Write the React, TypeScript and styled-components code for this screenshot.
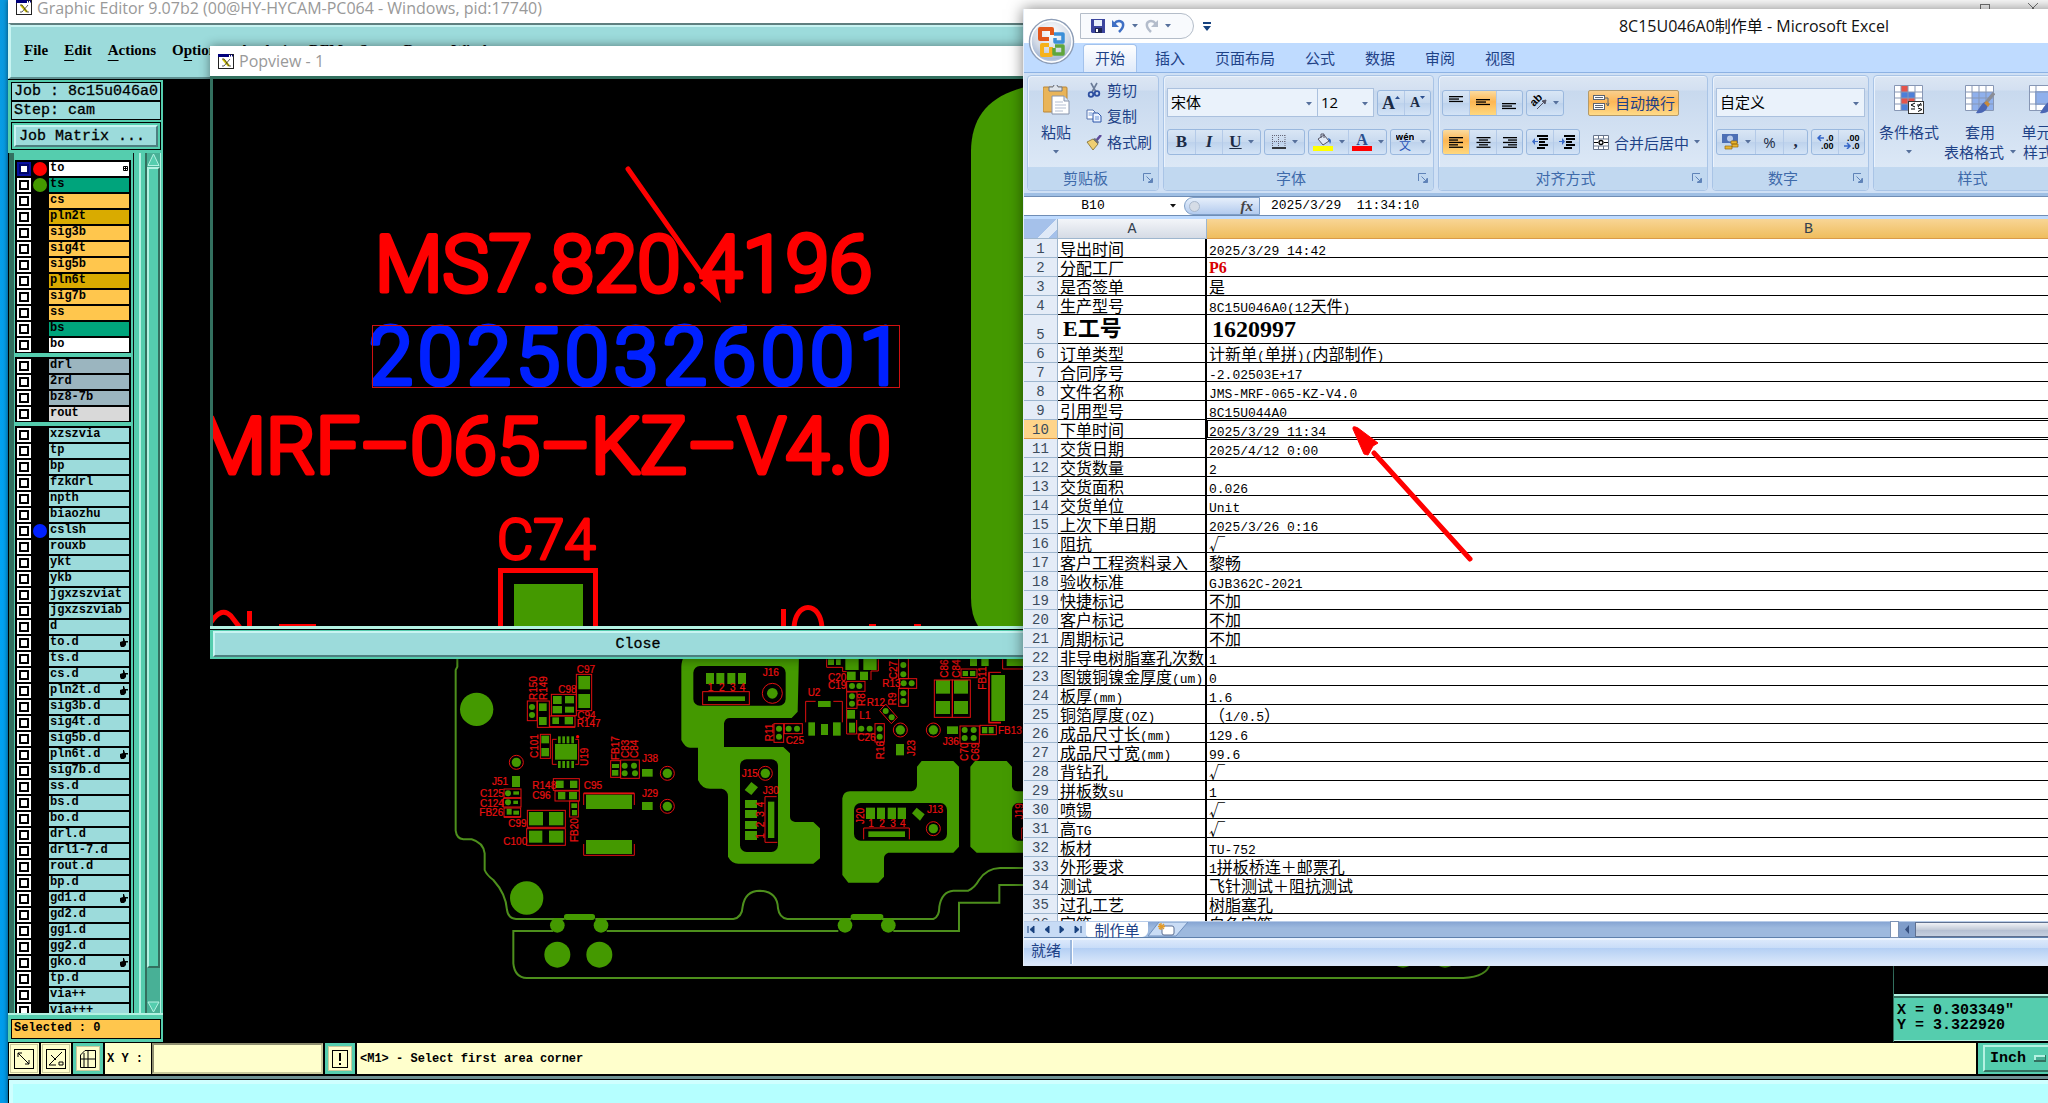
import React from 'react';
import styled, { createGlobalStyle, css } from 'styled-components';

const aqua = '#9cdbdb';
const teal = '#55cdae';
const tealDark = '#33705f';
const tealLight = '#b4f2e2';
const cream = '#ffffcc';
const pcbGreen = '#449900';
const uiFont = '"Open Sans", "Noto Sans CJK SC", sans-serif';
const monoFont = '"Liberation Mono", "Noto Sans CJK SC", monospace';
const ribbonInk = '#1e4287';

const GlobalStyle = createGlobalStyle`
  * { box-sizing: border-box; }
  html, body { margin: 0; height: 100%; overflow: hidden; background: #009be8; }
  #root { height: 100%; }
  button, input, select { font: inherit; color: inherit; margin: 0; padding: 0; border: 0; background: none; border-radius: 0; outline: 0; }
  svg { display: block; flex: none; }
`;

const Desktop = styled.div`
  position: relative;
  height: 100vh;
  padding-left: 8px;
  overflow: hidden;
  background: linear-gradient(#0a9ae0, #00a4f4 50%, #009ceb);
  font-family: ${uiFont};
`;

/* ---------- Graphic editor window ---------- */
const Editor = styled.main`
  display: flex;
  flex-direction: column;
  height: 100%;
  background: #000;
  box-shadow: 0 0 5px rgba(0, 0, 0, 0.6);
`;

const EditorTitle = styled.header`
  display: flex;
  align-items: center;
  gap: 5px;
  height: 23px;
  padding: 0 10px 8px 8px;
  background: #fff;
  color: #999;
  font-size: 16px;
  line-height: 16px;
  white-space: nowrap;
`;

const WindowButtons = styled.div`
  display: flex;
  gap: 38px;
  margin-left: auto;
  color: #777;
`;

const MenuBar = styled.nav`
  display: flex;
  align-items: center;
  gap: 16px;
  height: 56px;
  padding: 0 14px 2px 13px;
  background: ${aqua};
  border: solid;
  border-width: 2px 0 2px 3px;
  border-color: #5f7f7f #5f7f7f #5f8f90 #c8f4f2;
  box-shadow: inset 0 2px #c8f4f2;
  font: bold 15px/20px "Liberation Serif", serif;
`;

const MenuItem = styled.button`
  font: inherit;
  color: #000;
  & > u { text-underline-offset: 5px; }
`;

const Workspace = styled.div`
  display: flex;
  flex: 1;
  min-height: 0;
`;

const Sidebar = styled.aside`
  display: flex;
  flex-direction: column;
  width: 155px;
  flex: none;
  margin-top: 1px;
  background: ${teal};
  font: 15px/17px ${monoFont};
`;

const JobInfo = styled.div`
  margin: 2px 2px 2px 3px;
  border: 1px solid #000;
  background: ${aqua};
`;

const JobLine = styled.div`
  height: 17px;
  padding-left: 2px;
  -webkit-text-stroke: 0.3px #000;
  white-space: nowrap;
  & + & { border-top: 2px solid #000; height: 19px; }
`;

const MatrixFrame = styled.div`
  margin: 0 2px 3px 3px;
  padding: 2px;
  border: 1px solid #000;
`;

const MatrixButton = styled.button`
  display: block;
  width: 100%;
  height: 22px;
  padding-left: 3px;
  text-align: left;
  background: ${aqua};
  border: 2px solid;
  border-color: #c8f4f2 #4d7f80 #4d7f80 #c8f4f2;
  -webkit-text-stroke: 0.3px #000;
`;

const LayerPanel = styled.div`
  display: flex;
  flex: 1;
  min-height: 0;
  border-bottom: 2px solid ${tealLight};
`;

const LayerList = styled.div`
  width: 126px;
  padding: 7px 0 0 5px;
  overflow: hidden;
  border-left: 1px solid #000;
  background: linear-gradient(90deg, ${tealDark} 5px, ${teal} 5px);
  border-right: 1px solid #111;
`;

const LayerGroup = styled.div`
  margin: 0 2px 4px 1px;
  padding: 1px 2px 0;
  background: #000;
`;

const LayerRow = styled.label`
  display: grid;
  grid-template-columns: 14px 14px 1fr;
  column-gap: 2px;
  align-items: center;
  height: 16px;
`;

const LayerCheck = styled.input<{ $active?: boolean }>`
  appearance: none;
  width: 14px;
  height: 14px;
  background: #fff;
  border: 2px solid ${p => (p.$active ? '#0a10a0' : '#fff')};
  box-shadow: inset 0 0 0 2px ${p => (p.$active ? '#00066a' : '#000')};
`;

const LayerDot = styled.span<{ $color?: string }>`
  width: 14px;
  height: 14px;
  border-radius: 50%;
  background: ${p => p.$color || 'transparent'};
`;

const LayerName = styled.span<{ $bg: string }>`
  display: flex;
  align-items: center;
  justify-content: space-between;
  height: 14px;
  padding: 0 1px 1px;
  background: ${p => p.$bg};
  font: bold 12px/13px ${monoFont};
  white-space: nowrap;
`;

const Ridge = styled.div`
  width: 13px;
  background: linear-gradient(90deg, ${teal} 5px, ${tealLight} 5px 7px, ${teal} 7px 11px, ${tealDark} 11px);
`;

const ScrollTrack = styled.div`
  display: flex;
  flex-direction: column;
  width: 14px;
  background: #48b096;
  border-right: 1px solid ${tealLight};
`;

const ScrollThumb = styled.div`
  flex: 1;
  margin-bottom: 33px;
  background: ${teal};
  border: 2px solid;
  border-color: ${tealLight} ${tealDark} ${tealDark} ${tealLight};
`;

const Selected = styled.div`
  height: 20px;
  margin: 4px 2px 3px 3px;
  padding-left: 2px;
  border: 1px solid #000;
  background: #ffc64d;
  font: bold 12px/17px ${monoFont};
`;

const BoardCanvas = styled.div`
  flex: 1;
  min-width: 0;
  overflow: hidden;
`;

const Readouts = styled.aside`
  display: flex;
  flex-direction: column;
  justify-content: flex-end;
  width: 155px;
  flex: none;
  border-left: 1px solid ${tealDark};
`;

const Coordinates = styled.pre`
  margin: 0 0 1px;
  padding: 7px 3px 7px;
  background: ${teal};
  border-top: 2px solid ${tealLight};
  border-bottom: 1px solid ${tealLight};
  box-shadow: inset 0 2px ${tealDark};
  font: bold 15px/15px ${monoFont};
`;

const StatusRow = styled.div`
  display: flex;
  gap: 2px;
  height: 34px;
  padding: 1px 0 2px 1px;
  background: #000;
  font: bold 12px/16px ${monoFont};
`;

const ToolButton = styled.button<{ $teal?: boolean }>`
  display: grid;
  place-items: center;
  width: 30px;
  background: ${cream};
  border: ${p => (p.$teal ? `3px solid ${teal}` : `1px solid ${cream}`)};
  box-shadow: inset 0 0 0 1px #c9c99c;
`;

const CommandLabel = styled.label`
  display: flex;
  flex: none;
  align-items: center;
  gap: 9px;
  padding-left: 2px;
  background: ${cream};
`;

const CommandInput = styled.input`
  width: 171px;
  height: 31px;
  padding-left: 6px;
  background: ${cream};
  border: 2px solid;
  border-color: #8f8f70 #c9c99c #c9c99c #8f8f70;
  outline: 1px solid #000;
`;

const Message = styled.output`
  display: flex;
  flex: 1;
  align-items: center;
  padding-left: 3px;
  background: ${cream};
`;

const UnitFrame = styled.div`
  padding: 2px 0 2px 5px;
  width: 70px;
  background: ${teal};
`;

const UnitButton = styled.button`
  display: flex;
  align-items: center;
  gap: 8px;
  width: 80px;
  height: 27px;
  padding-left: 5px;
  border: 2px solid;
  border-color: ${tealLight} ${tealDark} ${tealDark} ${tealLight};
  font: bold 15px/18px ${monoFont};
`;

const BottomStrip = styled.footer`
  height: 27px;
  border-top: 3px solid #6f9294;
  padding: 1px 0 0 1px;
  background: #000;
  &::after { content: ''; display: block; height: 22px; background: #b5ffff; border: 4px solid #cfffff; border-bottom: 2px solid #6aa0a0; border-right: 0; }
`;

/* ---------- Popview window ---------- */
const Popview = styled.section`
  position: absolute;
  left: 210px;
  top: 46px;
  width: 900px;
  height: 613px;
  display: flex;
  flex-direction: column;
  background: #000;
  box-shadow: 0 0 10px rgba(0, 0, 0, 0.45);
`;

const PopTitle = styled.header`
  display: flex;
  align-items: center;
  gap: 5px;
  height: 30px;
  padding-left: 8px;
  background: #fff;
  color: #999;
  font-size: 16px;
`;

const PopCanvas = styled.div`
  flex: 1;
  border-top: 3px solid ${tealDark};
  border-left: 3px solid ${tealDark};
`;

const CloseFrame = styled.div`
  border-top: 3px solid ${tealLight};
  padding: 2px 3px;
  background: ${teal};
  box-shadow: inset 0 1px #000;
`;

const CloseButton = styled.button`
  display: block;
  width: 100%;
  height: 26px;
  padding: 1px 44px 0 0;
  background: ${aqua};
  border: 2px solid;
  border-color: #c8f4f2 #4d7f80 #4d7f80 #c8f4f2;
  font: 15px/20px ${monoFont};
  -webkit-text-stroke: 0.3px #000;
`;

/* ---------- Spreadsheet window ---------- */
const Excel = styled.section`
  position: absolute;
  left: 1023px;
  top: 9px;
  width: 1388px;
  background: #bfdbff;
  border-left: 1px solid #e6eef8;
  box-shadow: 0 0 14px rgba(0, 0, 0, 0.5);
  color: ${ribbonInk};
  font-size: 15px;
`;

const ExcelTitle = styled.header`
  display: flex;
  align-items: center;
  height: 34px;
  padding: 0 114px 0 56px;
  background: #fff;
`;

const QuickBar = styled.div`
  display: flex;
  align-items: center;
  gap: 7px;
  width: 114px;
  height: 26px;
  padding-left: 10px;
  background: #f8fafd;
  border: 1px solid #b4bdc9;
  border-radius: 0 13px 13px 0;
`;

const QuickMore = styled.button`
  margin-left: 9px;
`;

const DocTitle = styled.h1`
  flex: 1;
  margin: 0;
  text-align: center;
  font: 400 16px/24px ${uiFont};
  color: #111;
`;

const OfficeButton = styled.button`
  position: absolute;
  left: 4px;
  top: 9px;
`;

const Tabs = styled.nav`
  display: flex;
  align-items: flex-end;
  height: 29px;
  padding-left: 59px;
`;

const Tab = styled.button<{ $active?: boolean }>`
  height: 28px;
  padding: 0 11px 2px;
  margin-right: 6px;
  border: 1px solid transparent;
  border-bottom: 0;
  ${p => p.$active && css`
    background: linear-gradient(#fff, #dfeafa);
    border-color: #a3c2ec;
    border-radius: 4px 4px 0 0;
  `}
`;

const Ribbon = styled.div`
  display: flex;
  gap: 4px;
  height: 124px;
  padding: 2px 0 2px 3px;
  background: #cfe0f5;
  border-top: 1px solid #8db2e3;
  border-bottom: 3px solid #9fbfe4;
`;

const Group = styled.section<{ $w: number }>`
  display: flex;
  flex-direction: column;
  flex: none;
  width: ${p => p.$w}px;
  border: 1px solid #a9c4e6;
  border-radius: 4px;
  box-shadow: inset 1px 1px #eaf2fc;
  background: linear-gradient(#dce6f3, #d3e0f1 14px, #c8d9ee 15px, #dce8f6 92px);
`;

const GroupBody = styled.div`
  display: flex;
  flex: 1;
  padding: 0 3px;
`;

const Caption = styled.footer`
  display: flex;
  align-items: center;
  height: 23px;
  padding: 0 5px 1px 0;
  line-height: 20px;
  color: #3e6aaa;
  background: #c1d8f0;
  border-radius: 0 0 4px 4px;
`;

const CaptionText = styled.span`
  flex: 1;
  text-align: center;
`;

const ControlColumn = styled.div`
  display: flex;
  flex-direction: column;
  gap: 12px;
  padding-top: 12px;
`;

const ControlRow = styled.div<{ $tall?: boolean }>`
  display: flex;
  align-items: center;
  gap: 3px;
  height: ${p => (p.$tall ? 29 : 26)}px;
`;

const Cluster = styled.div`
  display: flex;
  height: 26px;
  border: 1px solid #9ab8de;
  border-radius: 3px;
  background: linear-gradient(#d9e6f5, #c7d9ef 50%, #bdd2ec 50%, #d3e3f6);
  overflow: hidden;
`;

const Tool = styled.button<{ $w?: number; $on?: boolean }>`
  display: flex;
  align-items: center;
  justify-content: center;
  gap: 6px;
  width: ${p => p.$w || 26}px;
  color: #1c2b45;
  & + & { border-left: 1px solid #b4cae8; }
  ${p => p.$on && css`background: linear-gradient(#fbdb9f, #fdb652 45%, #ffd87e);`}
`;

const TextTool = styled(Tool)`
  font: bold 17px/20px "Liberation Serif", serif;
`;

const SizeTool = styled(Tool)<{ $small?: boolean }>`
  gap: 0;
  font: bold ${p => (p.$small ? 14 : 18)}px/20px "Liberation Serif", serif;
  & > svg { margin-bottom: 10px; }
`;

const Combo = styled.div<{ $w: number }>`
  position: relative;
  width: ${p => p.$w}px;
  height: 29px;
  background: #eaf2fb;
  border: 1px solid #abc1de;
  & > svg { position: absolute; right: 5px; top: 13px; }
`;

const ComboSelect = styled.select`
  appearance: none;
  width: 100%;
  height: 100%;
  padding: 0 0 1px 3px;
  color: #000;
`;

const ComboPair = styled.div`
  display: flex;
  & > div + div { border-left: 0; }
`;

const SmallTools = styled.div`
  display: flex;
  flex-direction: column;
  gap: 2px;
  padding: 2px 0 0 5px;
`;

const SmallTool = styled.button`
  display: flex;
  align-items: center;
  gap: 5px;
  height: 24px;
  line-height: 24px;
`;

const BigTool = styled.button<{ $w: number }>`
  display: flex;
  flex-direction: column;
  align-items: center;
  flex: none;
  width: ${p => p.$w}px;
  padding-top: 9px;
  line-height: 20px;
  white-space: nowrap;
  & > svg:first-child { margin-bottom: 7px; }
`;

const BigLine = styled.span`
  display: flex;
  align-items: center;
  justify-content: center;
  gap: 6px;
  height: 20px;
`;

const Separator = styled.div`
  width: 2px;
  height: 82px;
  margin: 5px 4px 0;
  background: #9db7d8;
`;

const WideTool = styled.button<{ $on?: boolean }>`
  display: flex;
  align-items: center;
  gap: 5px;
  height: 26px;
  padding: 0 3px 0 4px;
  white-space: nowrap;
  border: 1px solid transparent;
  ${p => p.$on && css`
    border-color: #b59a68;
    border-radius: 2px;
    background: linear-gradient(#f9cf8e, #fcb757 45%, #ffdb88);
  `}
`;

const FormulaBar = styled.div`
  display: flex;
  align-items: stretch;
  height: 20px;
  margin-bottom: 3px;
  background: #fff;
  border: solid #6f8db5;
  border-width: 1px 0;
  color: #000;
  font: 13px/18px ${monoFont};
`;

const NameBox = styled.div`
  display: flex;
  align-items: center;
  width: 160px;
  padding-right: 8px;
`;

const NameInput = styled.input`
  flex: 1;
  width: 100px;
  padding-right: 8px;
  text-align: center;
`;

const FxPill = styled.div`
  display: flex;
  align-items: center;
  justify-content: space-between;
  width: 76px;
  padding: 0 6px 0 4px;
  border: 1px solid #7f9fc8;
  border-radius: 10px 0 0 10px;
  background: linear-gradient(#e6effb, #b3cbee);
  font: italic bold 15px/16px "Liberation Serif", serif;
  color: #444;
  &::before { content: ''; width: 9px; height: 9px; border-radius: 50%; background: #d5dce6; border: 1px solid #aab9cd; }
`;

const FormulaInput = styled.input`
  flex: 1;
  padding-left: 11px;
  white-space: pre;
`;

const SheetView = styled.div`
  height: 702px;
  overflow: hidden;
  background: #fff;
`;

const Sheet = styled.table`
  width: 100%;
  table-layout: fixed;
  border-collapse: separate;
  border-spacing: 0;
  color: #000;
`;

const ColHead = styled.th<{ $w?: number; $on?: boolean }>`
  width: ${p => (p.$w ? `${p.$w}px` : 'auto')};
  height: 20px;
  padding: 2px 0 0;
  font: 400 15px/17px ${monoFont};
  color: #34404e;
  border-bottom: 1px solid ${p => (p.$on ? '#d99a4a' : '#9eb6ce')};
  border-right: 1px solid #9eb6ce;
  background: ${p => (p.$on ? 'linear-gradient(#f8d595, #efbd5e)' : 'linear-gradient(#f3f5f9, #d5dbe5)')};
`;

const CornerHead = styled(ColHead)`
  background: linear-gradient(135deg, #a5c1ea 62%, #dfe9f7 62% 84%, #a5c1ea 84%);
`;

const RowHead = styled.th<{ $on?: boolean }>`
  padding: 0;
  vertical-align: bottom;
  font: 400 14px/16px ${monoFont};
  color: #3b4b5c;
  border-right: 1px solid #9eb6ce;
  border-bottom: 1px solid ${p => (p.$on ? '#e0963f' : '#9eb6ce')};
  background: ${p => (p.$on ? '#ffd48a' : '#e4ecf7')};
`;

const Cell = styled.td<{ $first?: boolean; $big?: boolean; $red?: boolean; $picked?: boolean; $bare?: boolean }>`
  position: relative;
  height: ${p => (p.$big ? 29 : 19)}px;
  padding: 0 0 0 2px;
  vertical-align: bottom;
  white-space: nowrap;
  font-family: "Noto Sans CJK SC", sans-serif;
  font-size: 16px;
  line-height: 18px;
  border-bottom: 1px solid ${p => (p.$bare || p.$picked ? '#fff' : '#000')};
  ${p => p.$first && css`border-right: 2px solid #000;`}
  ${p => p.$red && css`
    color: #d80000;
    font: bold 16px/17px "Liberation Serif", serif;
  `}
  ${p => p.$big && css`
    padding-left: 5px;
    font: bold 24px/28px "Liberation Serif", "Noto Sans CJK SC", serif;
  `}
  ${p => p.$big && p.$first && css`font-size: 22px;`}
  ${p => p.$picked && css`
    &::after { content: ''; position: absolute; inset: -2px 0 -2px 0; border: 3px double #000; border-left-width: 1px; border-left-style: solid; }
  `}
`;

const Latin = styled.span`
  font-family: ${monoFont};
  font-size: 13px;
  line-height: 0;
  white-space: pre;
`;

const SheetStrip = styled.div`
  display: flex;
  height: 17px;
  background: linear-gradient(#86a5d3, #9db9de 40%);
  border-top: 1px solid #b8cce8;
  border-bottom: 1px solid #5e80ac;
`;

const SheetNav = styled.div`
  display: flex;
  align-items: center;
  justify-content: space-around;
  width: 62px;
  background: #c7dbf5;
`;

const SheetTab = styled.button`
  width: 62px;
  background: #fff;
  line-height: 14px;
  border-radius: 0 0 6px 3px;
`;

const HScroll = styled.div`
  display: flex;
  align-items: center;
  width: 521px;
  margin-left: auto;
  gap: 5px;
  background: #7f9dca;
  &::before { content: ''; width: 7px; height: 15px; background: #fff; border: 1px solid #7c93b5; }
`;

const HThumb = styled.div`
  flex: 1;
  height: 15px;
  border: 1px solid #5f7090;
  background: linear-gradient(#f0f2f6, #c3cbd9 50%, #b3bdd0 50%, #c6d0e0);
`;

const ExcelStatus = styled.footer`
  height: 28px;
  display: flex;
  align-items: flex-start;
  border-top: 2px solid #eaf3ff;
  background: linear-gradient(#dbe8fb, #c8dcf8 8px, #b3cff4 8px, #dbe8fa 24px);
  &::after { content: ''; width: 2px; height: 24px; margin-left: 9px; background: #9bb8de; border-right: 1px solid #fff; }
`;

const StatusText = styled.span`
  padding-left: 7px;
  line-height: 20px;
`;

const Annotation = styled.svg`
  position: absolute;
  left: 320px;
  top: 412px;
  pointer-events: none;
`;

/* ---------- Icons ---------- */
const Caret = ({ dark }: { dark?: boolean }) => (
  <svg width="6" height="4" viewBox="0 0 6 4"><path d="M0 0H6L3 3.5Z" fill={dark ? '#111' : '#56709c'} /></svg>
);

const AppIcon = () => (
  <svg width="16" height="15" viewBox="0 0 16 15">
    <rect x=".5" y=".5" width="15" height="14" fill="#fff" stroke="#222" />
    <rect x="0" y="0" width="11" height="3" fill="#00007c" />
    <path d="M12 1.5h3" stroke="#00007c" strokeWidth="2" strokeDasharray="1 1" />
    <path d="M5 5l6 7" stroke="#d8c900" strokeWidth="2.4" />
    <path d="M4 5h2l5 7h2M12 5l-6 7H4" stroke="#333" strokeWidth=".8" fill="none" />
  </svg>
);

const Hand = () => (
  <svg width="8" height="9" viewBox="0 0 8 9"><path d="M0 4l3-1V0l1 0 1 3h3v1.5H6V7L4 9H1L0 7Z" /></svg>
);

const Launcher = () => (
  <svg width="10" height="10" viewBox="0 0 10 10" fill="none" stroke="#5f83b8">
    <path d="M.5 8V.5H8" /><path d="M3.5 3.5l4 4M9 5v4H5" /><path d="M9.5 5.5v4h-4Z" fill="#5f83b8" />
  </svg>
);

const Lines = ({ widths, top = 0, align = 'l' }: { widths: number[]; top?: number; align?: 'l' | 'c' | 'r' }) => (
  <svg width="15" height="15" viewBox="0 0 15 15">
    {widths.map((w, i) => (
      <rect key={i} x={align === 'l' ? 0 : align === 'r' ? 15 - w : (15 - w) / 2} y={top + i * 2.4} width={w} height="1.3" fill="#000" />
    ))}
  </svg>
);

const Indent = ({ flip }: { flip?: boolean }) => (
  <svg width="16" height="14" viewBox="0 0 16 14">
    <path d="M5 1h11M7 4h9M7 7h6M7 10h9M5 13h8" stroke="#000" strokeWidth="1.8" />
    <path d={flip ? 'M0 6h3V3l3 3.5L3 10V7H0Z' : 'M6 6H3V3L0 6.5 3 10V7h3Z'} fill="#3a6ac8" />
  </svg>
);

const OfficeOrb = () => (
  <svg width="47" height="47" viewBox="0 0 47 47">
    <defs>
      <radialGradient id="orb" cx=".5" cy=".3" r=".75">
        <stop offset="0" stopColor="#fff" /><stop offset=".55" stopColor="#d3dae6" /><stop offset=".8" stopColor="#a9bbd6" /><stop offset="1" stopColor="#f4f8fd" />
      </radialGradient>
    </defs>
    <circle cx="23.5" cy="23.5" r="22" fill="url(#orb)" stroke="#8d9db6" strokeWidth="1.5" />
    <circle cx="23.5" cy="23.5" r="20.5" fill="none" stroke="#fff" strokeWidth="1.5" />
    <g fill="none" strokeWidth="4" strokeLinejoin="round">
      <path d="M21 21h-9V11h12v6" stroke="#e2571c" />
      <path d="M26 16h9v8h-8v-4" stroke="#3b8fd8" strokeWidth="3.5" />
      <path d="M21 27h-7v10h9v-8" stroke="#f6b21b" />
      <path d="M27 28h8v8h-9v-6" stroke="#5fa63c" strokeWidth="3.5" />
    </g>
  </svg>
);

const SaveIcon = () => (
  <svg width="14" height="14" viewBox="0 0 14 14"><path d="M0 0h14v14H1L0 13Z" fill="#3b459e" /><rect x="3" y="1" width="8" height="6" fill="#e8f0fa" /><rect x="4" y="9" width="7" height="5" fill="#1c2452" /><rect x="5" y="10" width="2" height="3" fill="#fff" /></svg>
);

const UndoIcon = ({ flip, color }: { flip?: boolean; color: string }) => (
  <svg width="13" height="14" viewBox="0 0 13 14"><g transform={flip ? 'translate(13 0) scale(-1 1)' : undefined}><path d="M2 5C6 0 12 2 11 7c0 2-2 4-4 6" fill="none" stroke={color} strokeWidth="2.5" /><path d="M0 1v7h7Z" fill={color} /></g></svg>
);

const PasteIcon = () => (
  <svg width="27" height="30" viewBox="0 0 27 30">
    <rect x="0" y="2" width="24" height="25" rx="1" fill="#e9b458" stroke="#b98534" />
    <path d="M6 6V2h4a2.5 2.5 0 015 0h4v4Z" fill="#dfe4ea" stroke="#6d7686" />
    <path d="M9 11h12l5 5v13H9Z" fill="#fff" stroke="#8794ab" /><path d="M21 11v5h5" fill="#dfe8f4" stroke="#8794ab" />
    <path d="M12 17h8M12 20h11M12 23h11M12 26h8" stroke="#b4bfd2" />
  </svg>
);

const CutIcon = () => (
  <svg width="16" height="16" viewBox="0 0 16 16" fill="none"><path d="M5 1l5 9M11 1L6 10" stroke="#6b7c98" strokeWidth="1.6" /><circle cx="5" cy="12.5" r="2.3" stroke="#2d4fa0" strokeWidth="1.8" /><circle cx="11" cy="11.5" r="2.3" stroke="#2d4fa0" strokeWidth="1.8" /></svg>
);

const CopyIcon = () => (
  <svg width="16" height="14" viewBox="0 0 16 14"><path d="M1 1h6l2 2v7H1Z" fill="#fff" stroke="#5472ae" /><path d="M7 4h5l3 3v6H7Z" fill="#eaf2ff" stroke="#2c55a8" /><path d="M2.5 4h4M2.5 6h4M9 8h4M9 10h4" stroke="#6f96d8" /></svg>
);

const BrushIcon = () => (
  <svg width="16" height="15" viewBox="0 0 16 15"><path d="M15 0l-5 6" stroke="#5c4a9a" strokeWidth="2.5" /><path d="M1 7l6-3 5 5-5 6Z" fill="#efcf72" stroke="#7d6a2a" strokeWidth=".8" /><path d="M7 4l5 5 1-2-4-4Z" fill="#6b6f7d" /></svg>
);

const BorderIcon = () => (
  <svg width="14" height="14" viewBox="0 0 14 14" fill="none" stroke="#667"><path d="M.5 0v12M6.5 0v12M13 0v12M0 .5h14M0 6.5h14" strokeDasharray="1 1" /><path d="M0 13h14" stroke="#000" strokeWidth="1.5" /></svg>
);

const FillIcon = () => (
  <svg width="20" height="18" viewBox="0 0 20 18"><path d="M5 6l6-4 5 6-6 4Z" fill="#dfe8f5" stroke="#556" /><path d="M8 5V1h3v4" fill="none" stroke="#556" /><path d="M15 5c4 1 3 4 2 6Z" fill="#2c62b8" /><rect y="13" width="20" height="5" fill="#ff0" /></svg>
);

const WrapIcon = () => (
  <svg width="17" height="16" viewBox="0 0 17 16" fill="#fff" stroke="#5b6472"><rect x=".5" y=".5" width="11" height="4" /><rect x=".5" y="8.5" width="11" height="6" /><path d="M12 3h3v7M13 8l2 3 1-3M2 10.5h8M2 12.5h8M2 2.5h8" fill="none" /></svg>
);

const MergeIcon = () => (
  <svg width="16" height="15" viewBox="0 0 16 15"><path d="M.5 .5h15v14H.5ZM.5 4h15M.5 11h15M5.5 .5V4M10.5 .5V4M5.5 11v3.5M10.5 11v3.5" fill="#fff" stroke="#66748c" /><path d="M1 7.5h4M11 7.5h4" stroke="#000" /><circle cx="8" cy="7.5" r="2" fill="none" stroke="#000" strokeWidth="1.3" /></svg>
);

const MoneyIcon = () => (
  <svg width="17" height="16" viewBox="0 0 17 16"><rect width="16" height="9" fill="#4d6fb5" /><circle cx="8" cy="4.5" r="3" fill="#b9cbea" /><path d="M9 7h6v3H9ZM10 10h6v3h-6ZM3 12h7v3H3Z" fill="#e9b530" stroke="#96690b" strokeWidth=".7" /></svg>
);

const DecimalIcon = ({ grow }: { grow?: boolean }) => (
  <svg width="17" height="14" viewBox="0 0 17 14" fontFamily="Liberation Sans, sans-serif" fontWeight="bold" fontSize="9">
    <text x={grow ? 9 : 4} y="6">{grow ? '.0' : '.00'}</text><text x={grow ? 4 : 9} y="14">{grow ? '.00' : '.0'}</text>
    <path d={grow ? 'M7 3H2M4 0L1 3l3 3' : 'M1 11h5M4 8l3 3-3 3'} stroke="#3465c8" strokeWidth="1.5" fill="none" />
  </svg>
);

const StyleIcon = ({ kind }: { kind: 'cond' | 'table' | 'cell' }) => (
  <svg width="30" height="30" viewBox="0 0 30 30">
    <path d="M.5 .5h28v25H.5Z" fill="#fff" />
    {kind === 'cond' && <><path d="M7 .5h7v7H7ZM7 13h14v6H7Z" fill="#e5544b" /><path d="M7 7h14v6H7ZM7 19h7v6H7Z" fill="#4d7fd9" /></>}
    {kind === 'table' && <path d="M7 7h21v18H7Z" fill="#8fb0ec" />}
    {kind === 'cell' && <path d="M6 6h22v14H6Z" fill="#8fb0ec" />}
    <path d="M.5 .5h28v25H.5ZM7 .5v25M.5 7h28M.5 19h28" fill="none" stroke="#8797b5" />
    {kind !== 'cell' && <path d="M14 .5v25M21 .5v25M.5 13h28" fill="none" stroke="#8797b5" />}
    {kind === 'cond'
      ? <><rect x="14.5" y="16.5" width="15" height="12" fill="#fff" stroke="#333" /><path d="M21 18l-4 2 4 2M17 24h4M23 20h5M24 23l4 1.5-4 2M27 18l-3 4" stroke="#000" fill="none" /></>
      : <><path d="M29 8l-9 11" stroke="#8a8d96" strokeWidth="3.5" /><path d="M21 17c-3 0-5 3-10 11 6 1 11-2 12-8Z" fill="#4a66b4" /><path d="M19 18l4 4 2-3-3-3Z" fill="#c98a3a" /></>}
  </svg>
);

/* ---------- Board drawing ---------- */
type Rect = [number, number, number, number];

const Pads = ({ list, fill = pcbGreen, r = 0 }: { list: Rect[]; fill?: string; r?: number }) => (
  <>{list.map(([a, b, c, d], i) => <rect key={i} x={a} y={b} width={c - a} height={d - b} rx={r} fill={fill} />)}</>
);

const Frames = ({ list }: { list: Rect[] }) => (
  <>{list.map(([a, b, c, d], i) => <rect key={i} x={a} y={b} width={c - a} height={d - b} fill="none" stroke="#e01010" strokeWidth="3" />)}</>
);

const Dots = ({ list, r }: { list: [number, number][]; r: number }) => (
  <>{list.map(([x, y], i) => <circle key={i} cx={x} cy={y} r={r} fill={pcbGreen} />)}</>
);

const Rings = ({ list, r = 21 }: { list: [number, number][]; r?: number }) => (
  <>{list.map(([x, y], i) => <g key={i}><circle cx={x} cy={y} r={r} fill="none" stroke="#e01010" strokeWidth="3" /><circle cx={x} cy={y} r={r > 25 ? 16 : 14} fill={pcbGreen} /></g>)}</>
);

const Refs = ({ list }: { list: [string, number, number, number?][] }) => (
  <g fill="#e81010" stroke="#e81010" strokeWidth="0.6" fontFamily="Liberation Sans, sans-serif" fontSize="30">
    {list.map(([t, x, y, up], i) => <text key={i} transform={`translate(${x} ${y})${up ? ' rotate(-90)' : ''}`}>{t}</text>)}
  </g>
);

const Board = () => (
  <svg width="100%" height="100%">
    <g transform="translate(277 541) scale(0.33333)">
      <g fill="none" stroke="#4d8f1c" strokeWidth="6">
        <path d="M52 100V140L47 150V632Q50 656 70 658H95Q130 668 134 700V750Q140 765 160 780Q198 822 201 870Q205 895 228 897H880Q906 893 908 860Q915 812 960 812Q1012 815 1014 865Q1018 893 1042 897H1480Q1498 890 1498 860Q1505 815 1540 812H1585Q1605 802 1617 780Q1640 745 1680 744H1800" />
        <path d="M340 933H220V1030Q224 1072 260 1074H3070Q3142 1070 3150 1030V900" />
        <path d="M500 933H1195M1360 933H1557V848H1678V795H1800" />
      </g>
      <Dots list={[[110, 268], [260, 834]]} r={50} />
      <Dots list={[[352, 1004], [478, 1004], [2889, 1004], [3015, 1004]]} r={39} />
      <rect x="374" y="890" width="92" height="40" fill="#000" /><rect x="1234" y="890" width="92" height="40" fill="#000" />
      <Dots list={[[352, 916], [483, 916], [1215, 916], [1345, 916]]} r={22} />
      <Pads list={[[372, 882, 465, 900], [1232, 882, 1330, 900]]} r={8} />
      <Pads list={[[415, 168, 450, 208], [415, 222, 450, 264], [339, 228, 365, 252], [375, 228, 402, 250], [338, 258, 366, 280], [375, 260, 402, 278], [337, 292, 357, 312], [374, 291, 399, 313], [297, 250, 320, 273], [297, 291, 320, 315], [304, 347, 327, 370], [304, 384, 327, 409], [345, 372, 411, 419], [216, 468, 240, 501], [200, 566, 215, 584], [220, 572, 237, 584], [348, 482, 371, 504], [390, 482, 412, 504], [354, 516, 376, 538], [387, 516, 411, 538], [394, 550, 411, 564], [396, 570, 411, 586], [438, 524, 576, 567], [438, 660, 576, 702], [267, 576, 309, 616], [327, 576, 370, 616], [267, 632, 307, 668], [327, 632, 370, 668], [516, 432, 537, 444], [516, 450, 535, 467], [606, 447, 638, 470], [606, 546, 638, 570]]} />
      <Pads list={[354, 367, 380, 394].flatMap(x => [[x, 349, x + 8, 370], [x, 423, x + 8, 444]] as Rect[])} />
      <Dots list={[[276, 261], [276, 285], [204, 520], [204, 547], [554, 437], [582, 437], [554, 460], [585, 460]]} r={9} />
      <Pads list={[[220, 514, 237, 524], [220, 542, 234, 552]]} />
      <Frames list={[[409, 163, 455, 272], [334, 223, 409, 287], [329, 288, 405, 321], [262, 243, 291, 302], [292, 243, 328, 322], [301, 343, 331, 415], [192, 507, 243, 533], [190, 535, 243, 561], [192, 564, 242, 591], [340, 476, 418, 511], [345, 513, 418, 543], [389, 543, 415, 591], [262, 571, 376, 622], [260, 626, 376, 676], [512, 422, 541, 472], [542, 420, 598, 475]]} />
      <g fill="none" stroke="#e01010" strokeWidth="3">
        <path d="M350 358H337V433H350M406 358H416V433H406" />
        <path d="M431 555V520H583V555M431 672V706H583V672" />
        <path d="M431 520H583M329 321H405M192 591H242" strokeWidth="5" />
      </g>
      <circle cx="413" cy="350" r="5" fill="#f00" />
      <Rings list={[[229, 427], [682, 460], [682, 559]]} />
      <Refs list={[['C97', 410, 158], ['C98', 355, 218], ['C94', 412, 298], ['R147', 410, 322], ['R150', 290, 240, 1], ['R149', 320, 240, 1], ['C101', 294, 414, 1], ['U19', 443, 438, 1], ['J51', 156, 495], ['C125', 120, 532], ['C124', 120, 560], ['FB26', 118, 587], ['R148', 277, 508], ['C96', 277, 537], ['C95', 431, 508], ['FB20', 413, 666, 1], ['C99', 205, 621], ['C100', 190, 675], ['FB17', 537, 420, 1], ['C83', 568, 414, 1], ['C84', 595, 414, 1], ['J38', 606, 425], ['J29', 606, 532]]} />
      <path fill={pcbGreen} d="M735 100Q724 125 724 140V360Q735 383 750 383H774V480Q785 506 810 506H845Q864 510 864 530V710Q875 731 895 731H1120L1140 715V625L1120 606H1065Q1050 603 1050 590V400L1030 381H852V310Q855 294 870 294H1055L1073 275L1077 100Z" />
      <Pads fill="#000" r={20} list={[[760, 138, 1037, 257], [900, 418, 1014, 696]]} />
      <Pads list={[[798, 159, 822, 192], [829, 159, 853, 192], [862, 159, 886, 192], [894, 159, 918, 192], [804, 229, 915, 243]]} />
      <Frames list={[[788, 215, 928, 254]]} />
      <Refs list={[['1', 803, 214], ['2', 837, 214], ['3', 870, 214], ['4', 899, 214]]} />
      <g transform="translate(900 0)">
        <Rings list={[[97, 220]]} r={30} />
        <path fill={pcbGreen} d="M545 423H640L657 440V680L640 698H445Q432 703 432 715V770L415 788H325L307 765V535Q310 514 330 514H515Q531 510 531 495V440Z" />
        <path fill={pcbGreen} d="M705 423H800L816 440V500Q820 514 835 514H900V698H710L691 680V440Z" />
        <Pads fill="#000" r={20} list={[[342, 549, 621, 662], [816, 549, 950, 662]]} />
        <Pads list={[[15, 540, 51, 564], [15, 570, 51, 594], [15, 603, 51, 627], [15, 633, 51, 660], [84, 545, 103, 654], [378, 563, 405, 597], [411, 563, 435, 597], [443, 563, 468, 597], [473, 563, 498, 597], [385, 634, 495, 651], [234, 243, 272, 261], [205, 307, 225, 347], [243, 312, 264, 345], [279, 307, 302, 347], [316, 100, 356, 150], [370, 100, 410, 150], [321, 155, 347, 180], [360, 155, 384, 180], [321, 270, 345, 296], [327, 308, 345, 338], [264, 118, 282, 135], [288, 118, 302, 135], [468, 372, 492, 406], [621, 319, 654, 342], [726, 321, 742, 340], [746, 321, 761, 340], [588, 180, 630, 221], [642, 180, 684, 221], [588, 243, 630, 282], [642, 243, 684, 282], [754, 165, 795, 303], [690, 100, 711, 138], [724, 100, 746, 138], [800, 100, 870, 138], [668, 153, 684, 168], [690, 153, 706, 168]]} />
        <g fill={pcbGreen}><path d="M34 486L54 502L34 525L14 510ZM530 563L554 583L540 602L516 580Z" /></g>
        <Dots list={[[117, 326], [117, 350], [146, 326], [171, 326], [336, 198], [358, 198], [336, 229], [336, 251], [364, 326], [389, 326], [419, 326], [419, 350], [491, 190], [515, 190], [490, 220], [490, 243], [490, 135], [490, 163], [674, 330], [701, 330], [674, 354], [701, 354], [437, 273], [455, 292]]} r={9} />
        <Frames list={[[102, 311, 131, 367], [133, 311, 187, 341], [320, 184, 375, 214], [320, 216, 351, 265], [405, 311, 433, 366], [478, 176, 530, 205], [476, 205, 505, 259], [476, 100, 505, 176], [720, 316, 769, 344], [663, 147, 711, 173], [583, 180, 637, 292], [637, 180, 691, 292], [660, 318, 718, 370]]} />
        <g fill="none" stroke="#e01010" strokeWidth="3">
          <path d="M197 307V244H227M280 244H307V307M110 530H75V667H112M371 658V624H508V658M845 658V624H900" />
          <path d="M260 118V142H308V155H320M415 118V153H393V180M320 266V342H350V300M352 342H404M788 118V147H860" />
          <path d="M747 158V307M745 308H783" strokeWidth="5" /><path d="M745 157H783" />
          <path d="M437 252L472 292L454 311L419 272Z" />
        </g>
        <Rings list={[[76, 460], [580, 626], [481, 330], [580, 330]]} />
        <Refs list={[['J16', 68, 168], ['J15', 5, 471], ['J30', 68, 522], ['4', 72, 562, 1], ['3', 72, 590, 1], ['2', 72, 622, 1], ['1', 72, 656, 1], ['J20', 371, 612, 1], ['J13', 561, 579], ['1', 385, 622], ['2', 418, 622], ['3', 451, 622], ['4', 480, 622], ['J19', 848, 598, 1], ['U2', 203, 228], ['R11', 99, 364, 1], ['C25', 137, 371], ['C20', 264, 182], ['C19', 264, 208], ['R8', 375, 258, 1], ['R12', 380, 258], ['L1', 358, 297], ['C26', 352, 364], ['R16', 431, 418, 1], ['R13', 427, 202], ['C27', 472, 178, 1], ['R9', 469, 256, 1], ['J23', 525, 408, 1], ['J36', 608, 375], ['C70', 683, 423, 1], ['C69', 717, 423, 1], ['FB13', 774, 343], ['C86', 623, 173, 1], ['C84', 659, 173, 1], ['FB11', 738, 209, 1]]} />
      </g>
    </g>
  </svg>
);

// The serial number is plotted on a fixed character pitch.
const serial = '20250326001';
const serialPitch = 49;

const Zoomed = () => (
  <svg width="100%" height="100%">
    <g transform="translate(-213 -79)">
      <path fill={pcbGreen} d="M1040 84C990 92 972 115 971 150V598Q971 615 978 626H1040Z" />
      <g fontFamily="Roboto, sans-serif" fontWeight="300" strokeLinejoin="round" fill="#f00" stroke="#f00">
        <text x="375" y="291" fontSize="78" strokeWidth="5">MS7.820.4196</text>
        <text x="891" y="473" fontSize="78" strokeWidth="5" textAnchor="end">MRF–065–KZ–V4.0</text>
        <text x="497" y="559" fontSize="56" strokeWidth="3">C74</text>
        <text x={[...serial].map((_, i) => 369 + i * serialPitch).join(' ')} y="384" fontSize="79" strokeWidth="5" fill="#0020ff" stroke="#0020ff">{serial}</text>
      </g>
      <rect x="372.5" y="325.5" width="527" height="62" fill="none" stroke="#d01010" />
      <path d="M500.5 630V570.5H595.5V630" fill="none" stroke="#f00" strokeWidth="5" />
      <rect x="514" y="584" width="69" height="50" fill={pcbGreen} />
      <g fill="none" stroke="#f00" strokeWidth="5">
        <path d="M211 622Q222 606 231 616L241 629M249.5 611V630M783.5 609V630M794 630C794 600 822 600 822 630" />
        <path d="M279 625H316M869 625H876M914 625H921" strokeWidth="2" />
        <path d="M628 169L708 283" strokeLinecap="round" />
      </g>
      <path d="M721 303L700 283L714 272Z" fill="#f00" />
    </g>
  </svg>
);

/* ---------- Data ---------- */
const orange = '#ffc64d';
const gold = '#d9ab00';
const steel = '#9bb5bf';
const layerGroups: { name: string; bg: string; dot?: string; mark?: 'hand' | 'grid' }[][] = [
  [
    { name: 'to', bg: '#fff', dot: '#f00', mark: 'grid' }, { name: 'ts', bg: '#00a47c', dot: pcbGreen },
    { name: 'cs', bg: orange }, { name: 'pln2t', bg: gold }, { name: 'sig3b', bg: orange }, { name: 'sig4t', bg: orange },
    { name: 'sig5b', bg: orange }, { name: 'pln6t', bg: gold }, { name: 'sig7b', bg: orange }, { name: 'ss', bg: orange },
    { name: 'bs', bg: '#00a47c' }, { name: 'bo', bg: '#fff' },
  ],
  [{ name: 'drl', bg: steel }, { name: '2rd', bg: steel }, { name: 'bz8-7b', bg: steel }, { name: 'rout', bg: '#d9d9d9' }],
  ('xzszvia tp bp fzkdrl npth biaozhu cslsh rouxb ykt ykb jgxzszviat jgxzszviab d to.d* ts.d cs.d* pln2t.d* sig3b.d sig4t.d sig5b.d ' +
    'pln6t.d* sig7b.d ss.d bs.d bo.d drl.d drl1-7.d rout.d bp.d gd1.d* gd2.d gg1.d gg2.d gko.d* tp.d via++ via+++')
    .split(' ')
    .map(n => ({
      name: n.replace('*', ''),
      bg: aqua,
      dot: n === 'cslsh' ? '#0020ff' : undefined,
      mark: n.endsWith('*') ? ('hand' as const) : undefined,
    })),
];

// Menu captions; the underscore precedes the mnemonic letter.
const menus = ['_File', '_Edit', '_Actions', 'O_ptions', 'A_nalysis', '_DFM', '_Step', '_Rout', '_Windows'];

const rows: [string, string][] = [
  ['导出时间', '2025/3/29 14:42'], ['分配工厂', 'P6'], ['是否签单', '是'], ['生产型号', '8C15U046A0(12天件)'],
  ['E工号', '1620997'], ['订单类型', '计新单(单拼)(内部制作)'], ['合同序号', '-2.02503E+17'], ['文件名称', 'JMS-MRF-065-KZ-V4.0'],
  ['引用型号', '8C15U044A0'], ['下单时间', '2025/3/29 11:34'], ['交货日期', '2025/4/12 0:00'], ['交货数量', '2'],
  ['交货面积', '0.026'], ['交货单位', 'Unit'], ['上次下单日期', '2025/3/26 0:16'], ['阻抗', '√'],
  ['客户工程资料录入', '黎畅'], ['验收标准', 'GJB362C-2021'], ['快捷标记', '不加'], ['客户标记', '不加'], ['周期标记', '不加'],
  ['非导电树脂塞孔次数', '1'], ['图镀铜镍金厚度(um)', '0'], ['板厚(mm)', '1.6'], ['铜箔厚度(OZ)', '（1/0.5）'],
  ['成品尺寸长(mm)', '129.6'], ['成品尺寸宽(mm)', '99.6'], ['背钻孔', '√'], ['拼板数su', '1'], ['喷锡', '√'], ['高TG', '√'],
  ['板材', 'TU-752'], ['外形要求', '1拼板桥连＋邮票孔'], ['测试', '飞针测试＋阻抗测试'], ['过孔工艺', '树脂塞孔'], ['字符', '白色字符'],
];

const Mixed = ({ text }: { text: string }) => (
  <>{text.split(/([\x20-\x7e]+)/).filter(Boolean).map((part, i) => (/^[\x20-\x7e]/.test(part) ? <Latin key={i}>{part}</Latin> : part))}</>
);

const RibbonGroup = ({ title, w, launcher = true, children }: { title: string; w: number; launcher?: boolean; children: React.ReactNode }) => (
  <Group $w={w}>
    <GroupBody>{children}</GroupBody>
    <Caption><CaptionText>{title}</CaptionText>{launcher && <Launcher />}</Caption>
  </Group>
);

const Picker = ({ w, value, label }: { w: number; value: string; label: string }) => (
  <Combo $w={w}><ComboSelect aria-label={label} defaultValue={value}><option>{value}</option></ComboSelect><Caret /></Combo>
);

const ExcelWindow = () => (
  <Excel aria-label="Microsoft Excel">
    <ExcelTitle>
      <QuickBar>
        <button aria-label="保存"><SaveIcon /></button>
        <button aria-label="撤消"><UndoIcon color="#3f6fc4" /></button><Caret />
        <button aria-label="恢复"><UndoIcon flip color="#b3bccb" /></button><Caret />
      </QuickBar>
      <QuickMore aria-label="自定义快速访问工具栏">
        <svg width="8" height="9" viewBox="0 0 8 9"><path d="M0 0h8v2H0ZM0 4h8L4 9Z" fill="#16427f" /></svg>
      </QuickMore>
      <DocTitle>8C15U046A0制作单 - Microsoft Excel</DocTitle>
    </ExcelTitle>
    <OfficeButton aria-label="Office"><OfficeOrb /></OfficeButton>
    <Tabs>
      {['开始', '插入', '页面布局', '公式', '数据', '审阅', '视图'].map((t, i) => <Tab key={t} $active={i === 0}>{t}</Tab>)}
    </Tabs>
    <Ribbon>
      <RibbonGroup title="剪贴板" w={132}>
        <BigTool $w={50}><PasteIcon /><BigLine>粘贴</BigLine><BigLine><Caret /></BigLine></BigTool>
        <SmallTools>
          <SmallTool><CutIcon />剪切</SmallTool>
          <SmallTool><CopyIcon />复制</SmallTool>
          <SmallTool><BrushIcon />格式刷</SmallTool>
        </SmallTools>
      </RibbonGroup>
      <RibbonGroup title="字体" w={271}>
        <ControlColumn>
          <ControlRow $tall>
            <ComboPair><Picker w={151} value="宋体" label="字体" /><Picker w={56} value="12" label="字号" /></ComboPair>
            <Cluster>
              <SizeTool aria-label="增大字号">A<svg width="5" height="3" viewBox="0 0 5 3"><path d="M0 3h5L2.5 0Z" fill="#2b4f8f" /></svg></SizeTool>
              <SizeTool $small aria-label="减小字号">A<svg width="5" height="3" viewBox="0 0 5 3"><path d="M0 0h5L2.5 3Z" fill="#2b4f8f" /></svg></SizeTool>
            </Cluster>
          </ControlRow>
          <ControlRow>
            <Cluster><TextTool $w={27}>B</TextTool><TextTool $w={27}><i>I</i></TextTool><TextTool $w={38}><u>U</u><Caret /></TextTool></Cluster>
            <Cluster><Tool $w={39} aria-label="边框"><BorderIcon /><Caret /></Tool></Cluster>
            <Cluster>
              <Tool $w={39} aria-label="填充颜色"><FillIcon /><Caret /></Tool>
              <Tool $w={38} aria-label="字体颜色">
                <svg width="20" height="18" viewBox="0 0 20 18"><text x="10" y="12" textAnchor="middle" fontFamily="Liberation Serif, serif" fontWeight="bold" fontSize="16" fill="#2b4f8f">A</text><rect y="13" width="20" height="5" fill="#f00" /></svg>
                <Caret />
              </Tool>
            </Cluster>
            <Cluster>
              <Tool $w={39} aria-label="拼音">
                <svg width="18" height="18" viewBox="0 0 18 18"><text x="9" y="7" textAnchor="middle" fontFamily="Open Sans, sans-serif" fontSize="9" fontWeight="bold">wén</text><text x="9" y="17" textAnchor="middle" fontFamily="Noto Sans CJK SC, sans-serif" fontSize="12" fill="#2c55b8">文</text></svg>
                <Caret />
              </Tool>
            </Cluster>
          </ControlRow>
        </ControlColumn>
      </RibbonGroup>
      <RibbonGroup title="对齐方式" w={270}>
        <ControlColumn>
          <ControlRow $tall>
            <Cluster>
              <Tool $w={26} aria-label="顶端对齐"><Lines widths={[14, 10, 14]} top={1} /></Tool>
              <Tool $w={27} $on aria-label="垂直居中"><Lines widths={[14, 10, 14]} top={4} /></Tool>
              <Tool $w={26} aria-label="底端对齐"><Lines widths={[14, 10, 14]} top={8} /></Tool>
            </Cluster>
            <Cluster><Tool $w={36} aria-label="方向"><svg width="16" height="15" viewBox="0 0 16 15"><text transform="translate(3 12) rotate(-45)" fontSize="11" fontWeight="bold" fontFamily="Liberation Sans, sans-serif">ab</text><path d="M6 14l8-8M15 5l-1 4-3-3Z" stroke="#556" fill="#556" /></svg><Caret /></Tool></Cluster>
          </ControlRow>
          <ControlRow>
            <Cluster>
              <Tool $w={26} $on aria-label="左对齐"><Lines widths={[14, 9, 14, 9, 14]} top={2} /></Tool>
              <Tool $w={27} aria-label="居中"><Lines widths={[14, 9, 14, 9, 14]} top={2} align="c" /></Tool>
              <Tool $w={26} aria-label="右对齐"><Lines widths={[14, 9, 14, 9, 14]} top={2} align="r" /></Tool>
            </Cluster>
            <Cluster><Tool $w={26} aria-label="减少缩进量"><Indent /></Tool><Tool $w={26} aria-label="增加缩进量"><Indent flip /></Tool></Cluster>
          </ControlRow>
        </ControlColumn>
        <Separator />
        <ControlColumn>
          <ControlRow $tall><WideTool $on><WrapIcon />自动换行</WideTool></ControlRow>
          <ControlRow><WideTool><MergeIcon />合并后居中<Caret /></WideTool></ControlRow>
        </ControlColumn>
      </RibbonGroup>
      <RibbonGroup title="数字" w={157}>
        <ControlColumn>
          <ControlRow $tall><Picker w={149} value="自定义" label="数字格式" /></ControlRow>
          <ControlRow>
            <Cluster><Tool $w={38} aria-label="会计数字格式"><MoneyIcon /><Caret /></Tool><Tool $w={28}>%</Tool><TextTool $w={24}>,</TextTool></Cluster>
            <Cluster><Tool $w={26} aria-label="增加小数位数"><DecimalIcon grow /></Tool><Tool $w={26} aria-label="减少小数位数"><DecimalIcon /></Tool></Cluster>
          </ControlRow>
        </ControlColumn>
      </RibbonGroup>
      <RibbonGroup title="样式" w={204} launcher={false}>
        <BigTool $w={64}><StyleIcon kind="cond" /><BigLine>条件格式</BigLine><BigLine><Caret /></BigLine></BigTool>
        <BigTool $w={78}><StyleIcon kind="table" /><BigLine>套用</BigLine><BigLine>表格格式<Caret /></BigLine></BigTool>
        <BigTool $w={50}><StyleIcon kind="cell" /><BigLine>单元格</BigLine><BigLine>样式<Caret /></BigLine></BigTool>
      </RibbonGroup>
    </Ribbon>
    <FormulaBar>
      <NameBox><NameInput aria-label="名称框" defaultValue="B10" /><Caret dark /></NameBox>
      <FxPill>fx</FxPill>
      <FormulaInput aria-label="编辑栏" defaultValue="2025/3/29  11:34:10" />
    </FormulaBar>
    <SheetView>
      <Sheet>
        <thead><tr><CornerHead $w={34} /><ColHead $w={149}>A</ColHead><ColHead $on>B</ColHead></tr></thead>
        <tbody>
          {rows.map(([a, b], i) => {
            const big = i === 4;
            const red = i === 1;
            return (
              <tr key={i}>
                <RowHead $on={i === 9}>{i + 1}</RowHead>
                <Cell $first $big={big}>{big ? a : <Mixed text={a} />}</Cell>
                <Cell $big={big} $red={red} $picked={i === 9} $bare={i === 8}>{big || red ? b : <Mixed text={b} />}</Cell>
              </tr>
            );
          })}
        </tbody>
      </Sheet>
    </SheetView>
    <SheetStrip>
      <SheetNav>
        {['M1 1v7M7 1v7L3 4.5Z', 'M6 1v7L2 4.5Z', 'M2 1v7l4-3.5Z', 'M7 1v7M1 1v7l4-3.5Z'].map((d, i) => (
          <button key={i} aria-label={['第一张', '上一张', '下一张', '最后一张'][i]}><svg width="9" height="9" viewBox="0 0 9 9"><path d={d} fill="#17407e" stroke="#17407e" /></svg></button>
        ))}
      </SheetNav>
      <SheetTab>制作单</SheetTab>
      <svg width="40" height="15" viewBox="0 0 40 15"><path d="M0 14L11 0H40L28 14Z" fill="#c9dcf5" stroke="#6f8fbd" /><rect x="14" y="4" width="12" height="9" rx="2" fill="#fff" stroke="#5a6f94" /><path d="M13 1v7M10 4.5h7M11 2l5 5M16 2l-5 5" stroke="#e39a26" strokeWidth="1.3" /></svg>
      <HScroll><svg width="6" height="9" viewBox="0 0 6 9"><path d="M5 0v9L1 4.5Z" fill="#36507f" /></svg><HThumb /></HScroll>
    </SheetStrip>
    <ExcelStatus><StatusText>就绪</StatusText></ExcelStatus>
    <Annotation width="140" height="150" viewBox="0 0 140 150">
      <path d="M126 138L30 32" stroke="#f00" strokeWidth="5" strokeLinecap="round" />
      <path d="M9 8Q8 4 14 7L34 22L29 25L24 34L20 33Z" fill="#f00" stroke="#f00" />
    </Annotation>
  </Excel>
);

const App = () => (
  <Desktop>
    <GlobalStyle />
    <Editor>
      <EditorTitle>
        <AppIcon />
        <span>Graphic Editor 9.07b2 (00@HY-HYCAM-PC064 - Windows, pid:17740)</span>
        <WindowButtons>
          <svg width="10" height="12" viewBox="0 0 10 12"><path d="M0 7.5h10" stroke="currentColor" /></svg>
          <svg width="10" height="12" viewBox="0 0 10 12"><rect x=".5" y="2.5" width="9" height="9" fill="none" stroke="currentColor" /></svg>
          <svg width="10" height="12" viewBox="0 0 10 12"><path d="M0 1l10 10M10 1L0 11" stroke="currentColor" /></svg>
        </WindowButtons>
      </EditorTitle>
      <MenuBar>
        {menus.map(m => {
          const [before, after] = m.split('_');
          return <MenuItem key={m}>{before}<u>{after[0]}</u>{after.slice(1)}</MenuItem>;
        })}
      </MenuBar>
      <Workspace>
        <Sidebar>
          <JobInfo><JobLine>Job : 8c15u046a0</JobLine><JobLine>Step: cam</JobLine></JobInfo>
          <MatrixFrame><MatrixButton>Job Matrix ...</MatrixButton></MatrixFrame>
          <LayerPanel>
            <LayerList>
              {layerGroups.map((g, gi) => (
                <LayerGroup key={gi}>
                  {g.map(l => (
                    <LayerRow key={l.name}>
                      <LayerCheck type="checkbox" $active={l.name === 'to'} />
                      <LayerDot $color={l.dot} />
                      <LayerName $bg={l.bg}>
                        {l.name}
                        {l.mark === 'hand' && <Hand />}
                        {l.mark === 'grid' && <svg width="5" height="5" viewBox="0 0 5 5"><path d="M.5 .5h4v4h-4ZM2.5 0v5M0 2.5h5" fill="none" stroke="#000" /></svg>}
                      </LayerName>
                    </LayerRow>
                  ))}
                </LayerGroup>
              ))}
            </LayerList>
            <Ridge />
            <ScrollTrack>
              <svg width="13" height="14" viewBox="0 0 13 14"><path d="M6.5 1L12 12.5H1Z" fill={teal} stroke={tealLight} /></svg>
              <ScrollThumb />
              <svg width="13" height="12" viewBox="0 0 13 12"><path d="M1 1H12L6.5 11Z" fill={teal} stroke={tealLight} /></svg>
            </ScrollTrack>
          </LayerPanel>
          <Selected>Selected : 0</Selected>
        </Sidebar>
        <BoardCanvas><Board /></BoardCanvas>
        <Readouts><Coordinates>{'X = 0.303349"\nY = 3.322920'}</Coordinates></Readouts>
      </Workspace>
      <StatusRow>
        <ToolButton aria-label="Snap"><svg width="20" height="20" viewBox="0 0 20 20" fill="none" stroke="#000"><rect x=".5" y=".5" width="19" height="19" /><path d="M4 4l11 11M4 8V4h4M15 11v4h-4" /></svg></ToolButton>
        <ToolButton aria-label="Angle"><svg width="20" height="20" viewBox="0 0 20 20" fill="none" stroke="#000"><rect x=".5" y=".5" width="19" height="19" /><path d="M16 3L3 16h7M5 6l5 5M13 13h4v3h-4Z" /></svg></ToolButton>
        <ToolButton $teal aria-label="Grid"><svg width="16" height="18" viewBox="0 0 16 18" fill="none" stroke="#000"><path d="M.5 5L5 .5H15.5V17.5H.5ZM8 .5V17M.5 9H15.5M4 3v14" /></svg></ToolButton>
        <CommandLabel>X Y :<CommandInput type="text" defaultValue="" /></CommandLabel>
        <ToolButton $teal aria-label="Alert"><svg width="16" height="18" viewBox="0 0 16 18" fill="none" stroke="#000"><rect x=".5" y=".5" width="15" height="17" /><path d="M8 3v8M8 13v2" strokeWidth="2" /></svg></ToolButton>
        <Message>&lt;M1&gt; - Select first area corner</Message>
        <UnitFrame><UnitButton>Inch<svg width="12" height="7" viewBox="0 0 12 7"><rect width="12" height="7" fill={tealDark} /><rect width="11" height="5" fill={tealLight} /><rect x="2" y="2" width="9" height="3" fill="#48b096" /></svg></UnitButton></UnitFrame>
      </StatusRow>
      <BottomStrip />
    </Editor>
    <Popview aria-label="Popview">
      <PopTitle><AppIcon />Popview - 1</PopTitle>
      <PopCanvas><Zoomed /></PopCanvas>
      <CloseFrame><CloseButton>Close</CloseButton></CloseFrame>
    </Popview>
    <ExcelWindow />
  </Desktop>
);

export default App;
